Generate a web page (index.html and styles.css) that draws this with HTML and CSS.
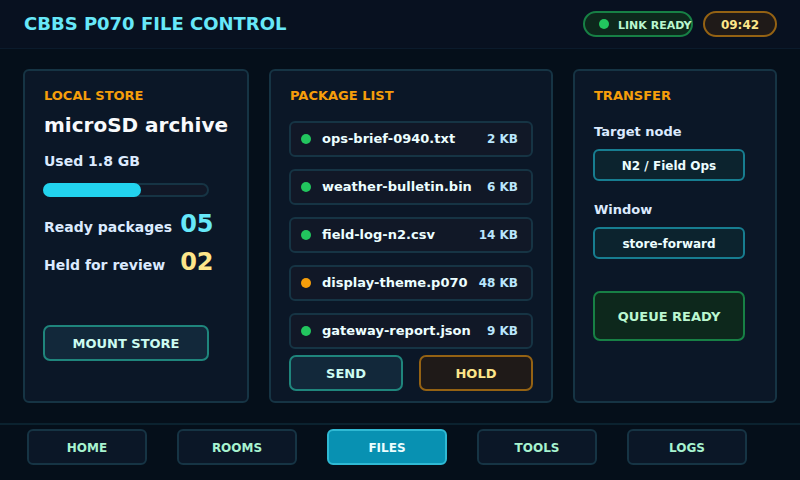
FILE: index.html
```html
<!DOCTYPE html>
<html lang="en">
<head>
    <meta charset="UTF-8">
    <meta name="viewport" content="width=device-width, initial-scale=1.0">
    <title>CBBS P070 File Control</title>
    <link rel="stylesheet" href="styles.css">
</head>
<body>
    <header class="topbar">
        <h1>CBBS P070 FILE CONTROL</h1>
        <div class="pill link-status"><span class="dot"></span><span class="pill-text">LINK READY</span></div>
        <div class="pill clock"><span class="pill-text">09:42</span></div>
    </header>

    <main class="panels">
        <section class="panel store">
            <h2>LOCAL STORE</h2>
            <p class="store-name">microSD archive</p>
            <p class="caption" id="usedLabel">Used 1.8 GB</p>
            <div class="meter" role="progressbar" aria-labelledby="usedLabel" aria-valuenow="59">
                <div class="meter-fill" style="width: 59%"></div>
            </div>
            <dl class="stats">
                <dt>Ready packages</dt>
                <dd class="ready">05</dd>
                <dt>Held for review</dt>
                <dd class="held">02</dd>
            </dl>
            <button type="button" class="btn btn-teal mount">MOUNT STORE</button>
        </section>

        <section class="panel packages">
            <h2>PACKAGE LIST</h2>
            <ul class="package-list">
                <li><span class="dot"></span><span class="name">ops-brief-0940.txt</span><span class="size">2 KB</span></li>
                <li><span class="dot"></span><span class="name">weather-bulletin.bin</span><span class="size">6 KB</span></li>
                <li><span class="dot"></span><span class="name">field-log-n2.csv</span><span class="size">14 KB</span></li>
                <li><span class="dot dot-amber"></span><span class="name">display-theme.p070</span><span class="size">48 KB</span></li>
                <li><span class="dot"></span><span class="name">gateway-report.json</span><span class="size">9 KB</span></li>
            </ul>
            <div class="actions">
                <button type="button" class="btn btn-teal">SEND</button>
                <button type="button" class="btn btn-amber">HOLD</button>
            </div>
        </section>

        <section class="panel transfer">
            <h2>TRANSFER</h2>
            <label for="targetNode">Target node</label>
            <select id="targetNode" name="targetNode">
                <option>N2 / Field Ops</option>
            </select>
            <label for="window">Window</label>
            <select id="window" name="window">
                <option>store-forward</option>
            </select>
            <button type="button" class="btn btn-green queue">QUEUE READY</button>
        </section>
    </main>

    <nav class="tabs">
        <a href="#home">HOME</a>
        <a href="#rooms">ROOMS</a>
        <a href="#files" class="active">FILES</a>
        <a href="#tools">TOOLS</a>
        <a href="#logs">LOGS</a>
    </nav>
</body>
</html>
```

FILE: styles.css
```css
* {
    box-sizing: border-box;
}
body {
    margin: 0;
    min-height: 100vh;
    display: flex;
    flex-direction: column;
    background-color: #050f1a;
    color: #dbeafe;
    font-family: "DejaVu Sans", sans-serif;
    font-weight: bold;
    font-size: 13px;
}
h1, h2, p, ul, dl, dd {
    margin: 0;
    padding: 0;
}
h1, h2, p, dl, label {
    padding-left: 1px;
}

/* top bar */
.topbar {
    display: flex;
    align-items: center;
    gap: 10px;
    height: 49px;
    padding: 0 23px;
    background-color: #081120;
    border-bottom: 1px solid #0b1b2c;
}
h1 {
    flex: 1;
    font-size: 18px;
    line-height: 24px;
    color: #67e8f9;
}
.pill {
    display: flex;
    align-items: center;
    justify-content: center;
    height: 26px;
    border: 2px solid;
    border-radius: 13px;
    white-space: nowrap;
}
.pill-text {
    padding-top: 2px;
}
.link-status {
    width: 110px;
    justify-content: flex-start;
    gap: 9px;
    padding-left: 14px;
    font-size: 11px;
    color: #bbf7d0;
    background-color: #0d281c;
    border-color: #178045;
}
.clock {
    width: 74px;
    font-size: 12px;
    color: #fde68a;
    background-color: #1f1a18;
    border-color: #946213;
}
.dot {
    flex: none;
    width: 10px;
    height: 10px;
    border-radius: 50%;
    background-color: #22c55e;
}
.dot-amber {
    background-color: #f59e0b;
}

/* panels */
.panels {
    flex: 1;
    display: grid;
    grid-template-columns: 113fr 142fr 102fr;
    gap: 20px;
    padding: 20px 23px;
}
.panel {
    display: flex;
    flex-direction: column;
    min-width: 0;
    padding: 16px 18px 10px;
    background-color: #0b1727;
    border: 2px solid #163444;
    border-radius: 6px;
}
h2 {
    font-size: 13px;
    line-height: 18px;
    color: #f59e0b;
}
.btn {
    height: 36px;
    padding: 0;
    border: 2px solid;
    border-radius: 7px;
    font: inherit;
    cursor: pointer;
}
.btn-teal {
    color: #ccfbf1;
    background-color: #12283a;
    border-color: #1f857c;
}
.btn-amber {
    color: #fde68a;
    background-color: #1f1a18;
    border-color: #946213;
}
.btn-green {
    color: #bbf7d0;
    background-color: #0d281c;
    border-color: #178045;
}

/* local store */
.store-name {
    margin-top: 8px;
    font-size: 20px;
    line-height: 24px;
    color: #f8fafc;
    white-space: nowrap;
}
.caption {
    margin-top: 14px;
    font-size: 14px;
    line-height: 20px;
}
.meter {
    height: 14px;
    margin: 12px 20px 0 0;
    background-color: #111827;
    border-radius: 7px;
    box-shadow: inset 0 0 0 2px #163444;
}
.meter-fill {
    height: 100%;
    background-color: #22d3ee;
    border-radius: 7px;
}
.stats {
    display: grid;
    grid-template-columns: auto auto;
    grid-auto-rows: 28px;
    justify-content: start;
    align-items: baseline;
    gap: 10px 8px;
    margin-top: 13px;
    font-size: 14px;
    line-height: 28px;
}
.stats dt {
    line-height: 20px;
}
.stats dd {
    font-size: 24px;
}
.ready {
    color: #67e8f9;
}
.held {
    color: #fde68a;
}
.mount {
    margin: 49px 20px 0 0;
}

/* package list */
.package-list {
    display: flex;
    flex-direction: column;
    gap: 12px;
    margin-top: 16px;
    list-style: none;
}
.package-list li {
    display: flex;
    align-items: center;
    height: 36px;
    padding: 0 13px 0 10px;
    background-color: #111827;
    border: 2px solid #163444;
    border-radius: 6px;
    white-space: nowrap;
}
.name {
    flex: 1;
    padding: 0 0 2px 11px;
    color: #ecfeff;
}
.size {
    font-size: 12px;
    color: #bae6fd;
}
.actions {
    display: grid;
    grid-template-columns: 1fr 1fr;
    gap: 16px;
    margin-top: 6px;
}

/* transfer */
.transfer {
    padding-right: 30px;
}
.transfer label {
    margin: 17px 0 7px;
    line-height: 20px;
}
.transfer select + label {
    margin-top: 19px;
}
.transfer select {
    appearance: none;
    height: 32px;
    padding: 2px 0 0;
    font: inherit;
    font-size: 12px;
    text-align: center;
    text-align-last: center;
    color: #ecfeff;
    background-color: #0c232e;
    border: 2px solid #177d90;
    border-radius: 6px;
}
.queue {
    height: 50px;
    margin-top: 32px;
}

/* bottom tabs */
.tabs {
    display: grid;
    grid-template-columns: repeat(5, 1fr);
    gap: 30px;
    padding: 4px 53px 15px 27px;
    border-top: 2px solid #0b222f;
}
.tabs a {
    display: flex;
    align-items: center;
    justify-content: center;
    height: 36px;
    padding-top: 2px;
    font-size: 12px;
    color: #a7f3d0;
    background-color: #0b1727;
    border: 2px solid #163444;
    border-radius: 6px;
    text-decoration: none;
}
.tabs a.active {
    color: #ecfeff;
    background-color: #0891b2;
    border-color: #2fb9d3;
}
```
